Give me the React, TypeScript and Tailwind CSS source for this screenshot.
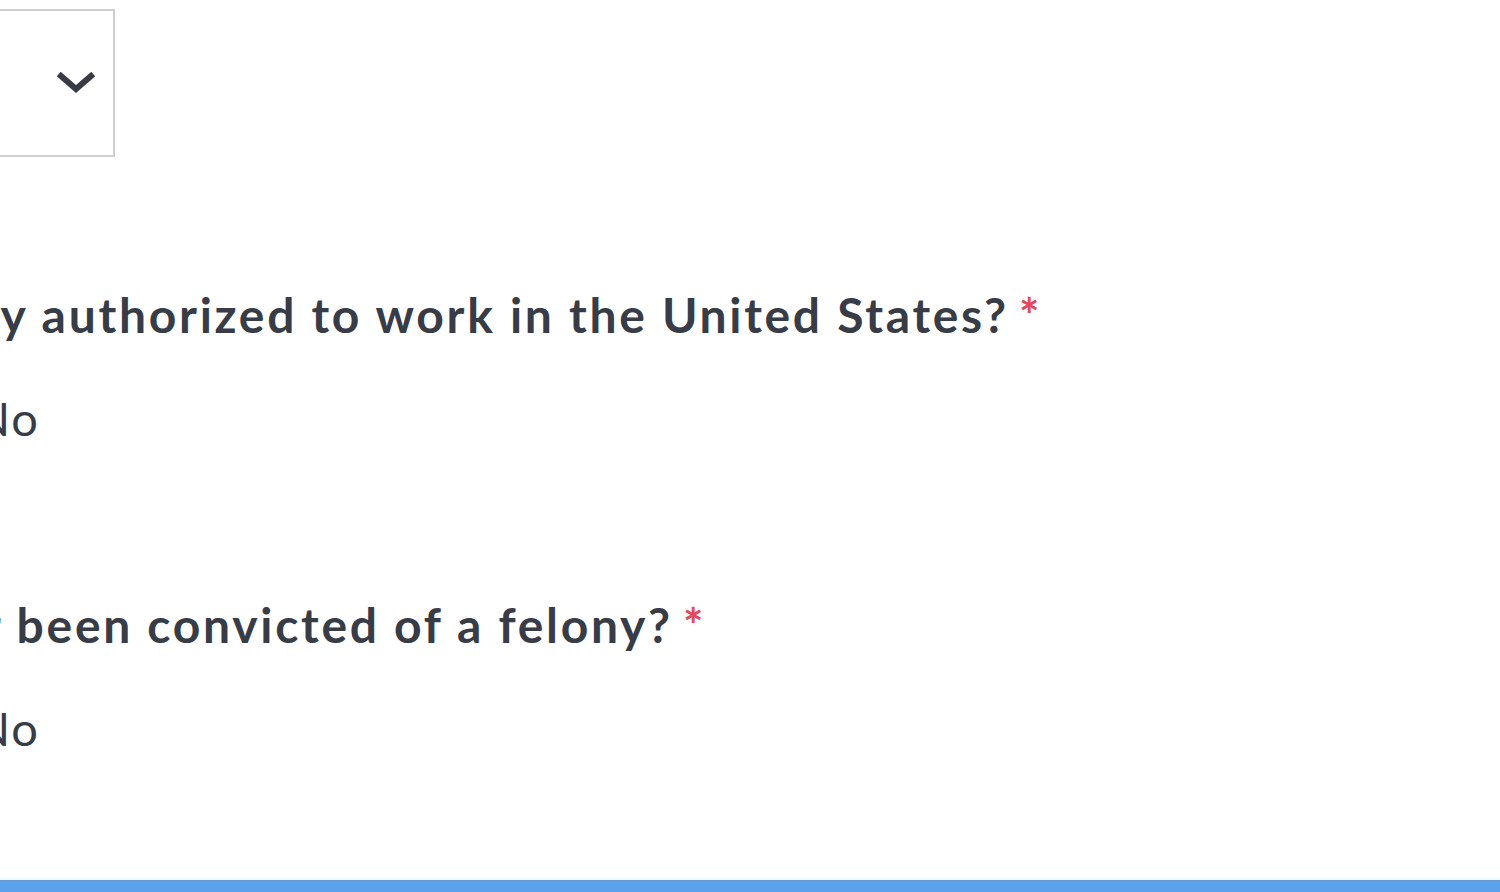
import React from "react";

const questions = [
	{ id: "work", label: "Are you legally authorized to work in the United States?", width: "w-[1042px]" },
	{ id: "felony", label: "Have you ever been convicted of a felony?", width: "w-[706px]" },
];

function Chevron() {
	return (
		<svg width="38" height="22" viewBox="0 0 38 22" fill="none">
			<polyline points="4,4 19,17 34,4" stroke="#363b45" strokeWidth="6" strokeLinejoin="miter" strokeLinecap="square" />
		</svg>
	);
}

function RadioOption({ label }: { label: string }) {
	return (
		<div className="flex w-[40px] justify-end">
			<label className="flex shrink-0 items-center gap-4 whitespace-nowrap text-[47px] leading-[60px] tracking-[2px] text-[#373c47]">
				<span className="h-[34px] w-[34px] rounded-full border-2 border-[#9aa0a8]" />
				{label}
			</label>
		</div>
	);
}

export default function App() {
	return (
		<div
			className="flex h-[892px] w-full flex-col overflow-hidden bg-white"
			style={{ fontFamily: "Lato, 'Open Sans', sans-serif" }}
		>
			<div className="pt-[9px]">
				<div className="-ml-[200px] flex h-[148px] w-[315px] items-center justify-end border-2 border-[#cfcfcf] pr-[18px]">
					<Chevron />
				</div>
			</div>

			{questions.map((q, i) => (
				<div key={q.id} className={i === 0 ? "mt-[128px]" : "mt-[147px]"}>
					<div className={`flex justify-end ${q.width}`}>
						<p className="shrink-0 whitespace-nowrap text-[48px] font-bold leading-[60px] tracking-[2.7px] text-[#373c47]">
							{q.label}
							<span className="ml-[10px] text-[#e5485b]">*</span>
						</p>
					</div>
					<div className="mt-[43px]">
						<RadioOption label="No" />
					</div>
				</div>
			))}

			<div className="mt-auto h-[4px] bg-gradient-to-b from-white to-[#e8f8fc]" />
			<div className="h-[12px] border-t border-[#6b9bd2] bg-[#5aa3ec]" />
		</div>
	);
}
